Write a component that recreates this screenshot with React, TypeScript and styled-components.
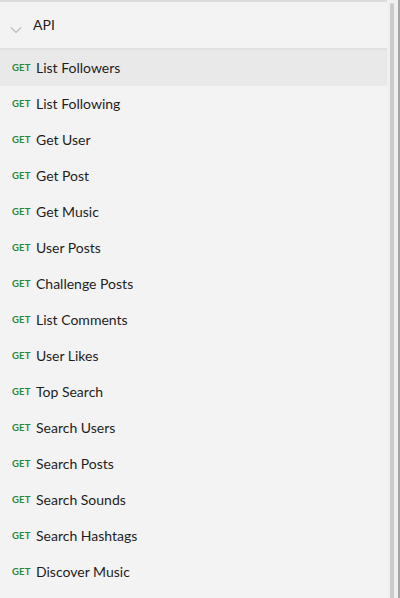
import React from "react";
import styled, { createGlobalStyle } from "styled-components";

const GlobalStyle = createGlobalStyle`
  html, body {
    margin: 0;
    padding: 0;
    background: #f3f3f3;
  }
  body {
    font-family: Lato, "Open Sans", sans-serif;
  }
`;

const endpoints = [
  "List Followers",
  "List Following",
  "Get User",
  "Get Post",
  "Get Music",
  "User Posts",
  "Challenge Posts",
  "List Comments",
  "User Likes",
  "Top Search",
  "Search Users",
  "Search Posts",
  "Search Sounds",
  "Search Hashtags",
  "Discover Music",
];

const App: React.FC = () => {
  return (
    <>
      <GlobalStyle />
      <StyledFrame>
        <StyledPanel>
          <StyledHeader>
            <svg width="12" height="8" viewBox="0 0 12 8" className="header__chevron">
              <path d="M1 1.5 L6 6.5 L11 1.5" fill="none" stroke="#bdbdbd" strokeWidth="1.2" />
            </svg>
            <span className="header__title">API</span>
          </StyledHeader>
          <StyledList>
            {endpoints.map((name, i) => (
              <Row key={name} active={i === 0}>
                <span className="row__method">GET</span>
                <span className="row__name">{name}</span>
              </Row>
            ))}
          </StyledList>
        </StyledPanel>
        <StyledTrack>
          <div className="track__thumb" />
        </StyledTrack>
      </StyledFrame>
    </>
  );
};

const StyledFrame = styled.div`
  display: flex;
  width: 400px;
  height: 598px;
  overflow: hidden;
  background: #f3f3f3;
`;

const StyledPanel = styled.div`
  display: flex;
  flex-direction: column;
  width: 387px;
  flex-shrink: 0;
  border-top: 2px solid #dcdcdc;
  overflow: hidden;
`;

const StyledHeader = styled.div`
  display: flex;
  align-items: center;
  height: 46px;
  padding-left: 10px;
  border-bottom: 2px solid #e0e0e0;

  .header__chevron {
    margin-top: 10px;
  }

  .header__title {
    margin-left: 11px;
    margin-top: -2px;
    font-size: 14px;
    color: #1e1e1e;
  }
`;

const StyledList = styled.div`
  display: flex;
  flex-direction: column;
`;

const Row = styled.div<{ active?: boolean }>`
  display: flex;
  align-items: center;
  box-sizing: border-box;
  height: 36px;
  flex-shrink: 0;
  padding: 0 0 2px 12px;
  background: ${p => (p.active ? "#e9e9e9" : "transparent")};

  .row__method {
    width: 24px;
    font-size: 9.5px;
    font-weight: 700;
    color: #2a8a3a;
    letter-spacing: 0.2px;
  }

  .row__name {
    font-size: 14px;
    color: #1e1e1e;
  }
`;

const StyledTrack = styled.div`
  display: flex;
  flex: 1;
  padding: 3px 4px 0 3px;
  background: #f0f0f0;
  border-right: 2px solid #a6a6a6;

  .track__thumb {
    flex: 1;
    background: #cbcbcb;
    border-radius: 3px 3px 0 0;
  }
`;

export default App;
